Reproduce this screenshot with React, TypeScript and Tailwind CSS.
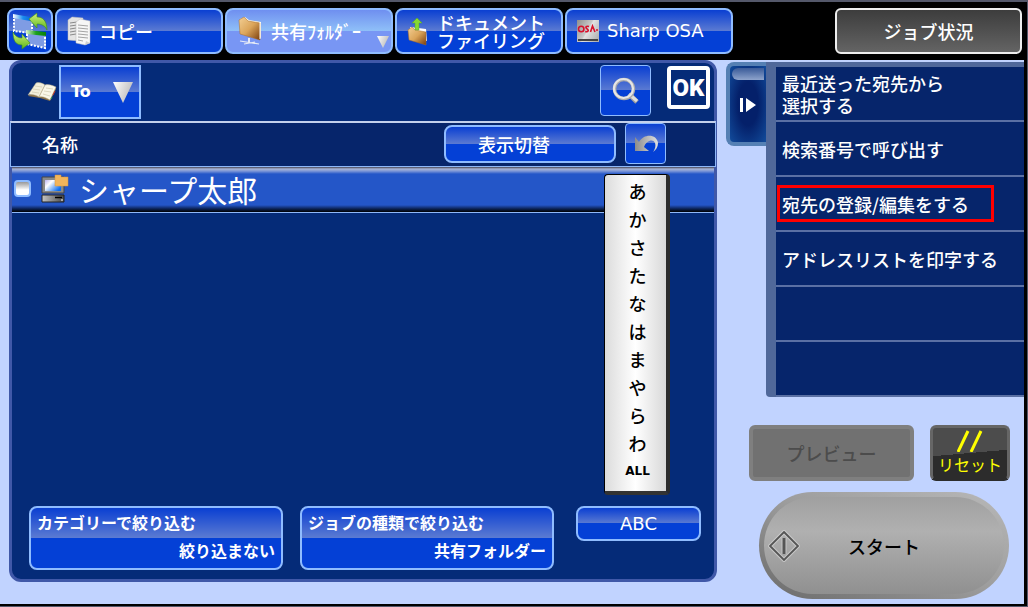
import type { ReactNode } from 'react';

const gloss = 'bg-[linear-gradient(#0a3fd2,#5c7bd2_50%,#0440d6_50%)] border-[#8fbcff]';
const latin = "font-['DejaVu_Sans','Noto_Sans_CJK_JP',sans-serif]";

const kana = ['あ', 'か', 'さ', 'た', 'な', 'は', 'ま', 'や', 'ら', 'わ'];

const menuItems = [
  { lines: ['最近送った宛先から', '選択する'] },
  { lines: ['検索番号で呼び出す'] },
  { lines: ['宛先の登録/編集をする'], marked: true },
  { lines: ['アドレスリストを印字する'] },
  { lines: [] },
  { lines: [] },
];

function SwitchIcon() {
  return (
    <svg viewBox="0 0 36 38" className="h-[38px] w-9" aria-hidden="true">
      <defs>
        <linearGradient id="sw-blue">
          <stop offset="0" stopColor="#fff" />
          <stop offset="0.5" stopColor="#1a8cf0" />
          <stop offset="1" stopColor="#0560d0" />
        </linearGradient>
        <linearGradient id="sw-green">
          <stop offset="0" stopColor="#dff5d0" />
          <stop offset="0.5" stopColor="#1ca01c" />
          <stop offset="1" stopColor="#0a800a" />
        </linearGradient>
        <linearGradient id="sw-arrow" x1="0" y1="0" x2="0" y2="1">
          <stop offset="0" stopColor="#d2f07a" />
          <stop offset="1" stopColor="#5cb81c" />
        </linearGradient>
      </defs>
      <path d="M2 5l18 3v14L2 19z" fill="#7f9ce4" />
      <path d="M2 7v12l18 2V8" fill="none" stroke="#fff" strokeWidth="2" strokeDasharray="2 1.4" />
      <path d="M1 2l20 3.500v4L1 6z" fill="url(#sw-blue)" />
      <path d="M15 20l19 3v13l-19-4z" fill="#7f9ce4" />
      <path d="M15 22v10l18 4V23" fill="none" stroke="#fff" strokeWidth="2" strokeDasharray="2 1.4" />
      <path d="M14 18l20 2v4l-20-2z" fill="url(#sw-green)" />
      <path d="M17 7l8-6v4c6 0 10 4 10 13-2-4-5-6-10-6v4z" fill="url(#sw-arrow)" stroke="#3f8f18" strokeWidth="0.6" />
      <path d="M18 31l-8 6v-4C4 33 1 29 1 20c2 4 5 6 9 6v-4z" fill="url(#sw-arrow)" stroke="#3f8f18" strokeWidth="0.6" />
    </svg>
  );
}

function CopyIcon() {
  return (
    <svg viewBox="0 0 24 30" className="h-[30px] w-6" aria-hidden="true">
      <path d="M1 4l4-3 11 1v21l-4 2-11-1z" fill="#e4e4e4" stroke="#bbb" strokeWidth="0.5" />
      <path d="M3 7l7-1M3 10l7-1M3 13l6-1M3 16l6-1M3 19l6-1" stroke="#8a8a8a" />
      <path d="M9 6l4-3 10 2v22l-5 2-9-2z" fill="#f6f6f6" stroke="#bbb" strokeWidth="0.5" />
      <path d="M11 9l10 1M11 12l10 1M11 15l10 1M11 18l10 1M11 21l10 1M11 24l5 1" stroke="#a4a4a4" />
      <path d="M18 29l1-4 4 2z" fill="#cfcfcf" />
    </svg>
  );
}

function FolderGradient({ id }: { id: string }) {
  return (
    <linearGradient id={id} x1="0" y1="0" x2="1" y2="1">
      <stop offset="0" stopColor="#f3cf94" />
      <stop offset="0.5" stopColor="#dba55a" />
      <stop offset="1" stopColor="#7a3d0c" />
    </linearGradient>
  );
}

function NetworkFolderIcon() {
  return (
    <svg viewBox="0 0 26 30" className="h-[30px] w-[26px]" aria-hidden="true">
      <defs>
        <FolderGradient id="net-folder" />
      </defs>
      <path d="M3 3l5-2 4 3 12 2v16L5 16z" fill="#fbf2dc" />
      <path d="M2 4l5-3 4 4 12 2v17L3 18z" fill="url(#net-folder)" stroke="#a86b28" strokeWidth="0.5" />
      <path d="M23 6v17" stroke="#fff" strokeWidth="1" />
      <path d="M12 22v5" stroke="#e6ebf6" strokeWidth="2" />
      <path d="M3 25l19 3M7 28l11-2" stroke="#e6ebf6" strokeWidth="1.2" />
    </svg>
  );
}

function FilingIcon() {
  return (
    <svg viewBox="0 0 22 29" className="h-[29px] w-[22px]" aria-hidden="true">
      <defs>
        <FolderGradient id="filing-folder" />
      </defs>
      <path d="M3 10l16 2 1 12-16-4z" fill="#fff" />
      <path d="M1 13l4-3 3 3 11 2v13L2 23z" fill="url(#filing-folder)" stroke="#a86b28" strokeWidth="0.5" />
      <path d="M10 1l5 5h-3v7H8V6H5z" fill="#86d832" stroke="#5aa81c" strokeWidth="0.5" />
    </svg>
  );
}

function OsaIcon() {
  return (
    <span className="flex size-[22px] flex-col justify-between bg-[linear-gradient(120deg,#8f8f8f,#c8c8c8_45%,#e2e2e2_50%,#a8a8a8)] pt-1 pb-px">
      <svg viewBox="0 0 22 10" className="h-2.5 w-[22px]" aria-hidden="true">
        <g fill="none" stroke="#d8102c" strokeWidth="1.600">
          <circle cx="4.200" cy="5" r="2.700" />
          <path d="M12 2.500c-3-1-4 1-2 2.300s1.500 3.500-1.800 2.700M13.500 8l2-6 2.500 6" />
        </g>
        <circle cx="20" cy="6" r="1" fill="#d8102c" />
      </svg>
      <span className="mx-px h-0.5 bg-[#444]" />
    </span>
  );
}

function BookIcon() {
  return (
    <svg viewBox="0 0 30 20" className="h-5 w-[30px]" aria-hidden="true">
      <path d="M1 14l12 2 10 3 6-12-1-2-14 1z" fill="#8a7048" />
      <path d="M1 13L9 1c3-1 7 0 9 2l-6 12c-3-2-7-3-11-2z" fill="#f3efdc" stroke="#b0a684" strokeWidth="0.5" />
      <path d="M12 15l6-12c3-1 7 0 11 2l-6 13c-4-2-7-4-11-3z" fill="#faf7e8" stroke="#b0a684" strokeWidth="0.5" />
      <path d="M8 4l7 1M6 7l7 1M5 10l7 1M19 6l7 1M17 9l7 1M16 12l7 2" stroke="#d6cfb4" strokeWidth="0.8" />
      <path d="M28 9l-2 4" stroke="#c83a2a" />
      <path d="M25 15l-1 2" stroke="#2a9a5a" />
    </svg>
  );
}

function Triangle({ id, className }: { id: string; className: string }) {
  return (
    <svg viewBox="0 0 20 20" preserveAspectRatio="none" className={className} aria-hidden="true">
      <defs>
        <linearGradient id={id} x1="0" y1="0" x2="1" y2="0.4">
          <stop offset="0" stopColor="#fff" />
          <stop offset="1" stopColor="#bdbdbd" />
        </linearGradient>
      </defs>
      <path d="M0 0h20L10 20z" fill={`url(#${id})`} />
    </svg>
  );
}

function SearchIcon() {
  return (
    <svg viewBox="0 0 28 28" className="size-7" aria-hidden="true">
      <path d="M17 17l8 8" stroke="#9f9f9f" strokeWidth="5" />
      <path d="M17 17l8 7" stroke="#dedede" strokeWidth="3" />
      <circle cx="12" cy="12" r="9.5" fill="none" stroke="#aaa" strokeWidth="3.4" />
      <circle cx="11.5" cy="11.5" r="9.5" fill="none" stroke="#e6e6e6" strokeWidth="2.2" />
    </svg>
  );
}

function UndoIcon() {
  return (
    <svg viewBox="0 0 24 20" className="h-5 w-6" aria-hidden="true">
      <defs>
        <linearGradient id="undo">
          <stop offset="0" stopColor="#8c8c8c" />
          <stop offset="1" stopColor="#e0e0e0" />
        </linearGradient>
      </defs>
      <path d="M1 3v14h14l-5-4C12 7 19 4 21 9c1 3 0 6-2 9 3-2 5-5 5-9C23 0 10-1 5 8z" fill="url(#undo)" />
    </svg>
  );
}

function ComputerIcon() {
  return (
    <svg viewBox="0 0 28 29" className="h-[29px] w-7" aria-hidden="true">
      <defs>
        <linearGradient id="screen" x1="0" y1="0" x2="1" y2="0.7">
          <stop offset="0" stopColor="#b9b4f0" />
          <stop offset="0.35" stopColor="#fff" />
          <stop offset="1" stopColor="#0a6cf0" />
        </linearGradient>
        <linearGradient id="case">
          <stop offset="0" stopColor="#c4c4c4" />
          <stop offset="1" stopColor="#4a4a4a" />
        </linearGradient>
      </defs>
      <path d="M1 3h22v16H1z" fill="#8a8a8a" stroke="#444" />
      <path d="M4 6h16v11H4z" fill="url(#screen)" />
      <path d="M1 21h22v7H1z" fill="url(#case)" stroke="#222" />
      <path d="M14 23.500h7" stroke="#000" strokeWidth="1.500" />
      <path d="M20 26h2" stroke="#fff" />
      <path d="M14 1h6v2h7v9H14z" fill="#f2b55c" stroke="#d8953a" strokeWidth="0.5" />
    </svg>
  );
}

function StartIcon() {
  return (
    <svg viewBox="0 0 32 32" className="size-8" aria-hidden="true">
      <path d="M16 2l14 14-14 14L2 16z" fill="none" stroke="#ddd" strokeWidth="4" opacity="0.6" />
      <path d="M16 2l14 14-14 14L2 16z" fill="none" stroke="#555" strokeWidth="1.8" />
      <path d="M16 8v16" stroke="#ddd" strokeWidth="5" opacity="0.6" />
      <path d="M16 8v16" stroke="#555" strokeWidth="3" />
    </svg>
  );
}

function ModeTab({ icon, active, children }: { icon: ReactNode; active?: boolean; children: ReactNode }) {
  const look = active
    ? 'bg-[linear-gradient(#6f8ff0,#8fc0f8_50%,#7896f4_50%)] border-[#8fbcff]'
    : gloss;
  return (
    <button
      type="button"
      className={`relative flex max-w-42 flex-1 items-center gap-2 rounded-lg border-2 pl-2.5 text-left whitespace-nowrap ${look}`}
    >
      {icon}
      {children}
      {active && <Triangle id="tab-tri" className="absolute right-0.5 bottom-1 h-3 w-3" />}
    </button>
  );
}

function FilterButton({ title, value }: { title: string; value: string }) {
  return (
    <button
      type="button"
      className={`flex h-16 max-w-[254px] flex-1 flex-col items-start justify-between rounded-lg border-2 px-1.5 pb-1 text-base font-bold ${gloss}`}
    >
      <span className="leading-7">{title}</span>
      <span className="self-end leading-7">{value}</span>
    </button>
  );
}

function Header() {
  return (
    <header className="flex h-[58px] justify-between bg-black py-1.5 pr-0.5 pl-[7px]">
      <nav className="flex flex-1 gap-0.5">
        <button
          type="button"
          aria-label="切替"
          className={`flex w-[46px] items-center justify-center rounded-lg border-2 ${gloss}`}
        >
          <SwitchIcon />
        </button>
        <ModeTab icon={<CopyIcon />}>コピー</ModeTab>
        <ModeTab icon={<NetworkFolderIcon />} active>
          共有ﾌｫﾙﾀﾞｰ
        </ModeTab>
        <ModeTab icon={<FilingIcon />}>
          <span className="leading-[18px]">
            ドキュメント
            <br />
            ファイリング
          </span>
        </ModeTab>
        <ModeTab icon={<OsaIcon />}>
          <span className={latin}>Sharp OSA</span>
        </ModeTab>
      </nav>
      <button
        type="button"
        className="w-[187px] rounded-md border-2 border-[#eee] bg-linear-to-b from-[#3d3d3d] to-[#646464]"
      >
        ジョブ状況
      </button>
    </header>
  );
}

function AddressPanel() {
  return (
    <main className="flex flex-1 flex-col rounded-xl border-3 border-[#4058a8] bg-[#052b78]">
      <div className="flex h-[58px] items-start pt-0.5 pr-1 pl-[15px]">
        <div className="flex items-center gap-0.5">
          <BookIcon />
          <button
            type="button"
            className={`flex h-[54px] w-[82px] items-center justify-between border-2 pr-1.5 pl-2.5 text-base font-bold ${gloss} ${latin}`}
          >
            To
            <Triangle id="to-tri" className="h-[21px] w-5" />
          </button>
        </div>
        <button
          type="button"
          aria-label="検索"
          className={`ml-auto flex size-[51px] items-center justify-center rounded-sm border ${gloss}`}
        >
          <SearchIcon />
        </button>
        <button
          type="button"
          className="mt-px ml-4 size-[43px] rounded-sm border-4 border-white font-['Roboto',sans-serif] text-2xl leading-none font-black"
        >
          OK
        </button>
      </div>

      <div className="-mx-0.5 flex h-[46px] items-center border border-t-2 border-[#8fb8f8] border-t-[#c3d0ec] bg-[#06256b] pr-[49px] pb-0.5 pl-[31px]">
        <h1>名称</h1>
        <button
          type="button"
          className={`ml-auto h-[38px] w-[172px] rounded-lg border-2 pr-8 ${gloss}`}
        >
          表示切替
        </button>
        <button
          type="button"
          aria-label="戻す"
          className={`ml-[9px] flex size-[41px] items-center justify-center rounded-sm border ${gloss}`}
        >
          <UndoIcon />
        </button>
      </div>

      <div className="relative flex-1">
        <label className="flex h-[46px] items-center border-b border-[#8fb8f8] bg-[linear-gradient(#445,#a8b4d4_2px,#7f98d8_4px,#2456c8_7px,#2456c8_38px,#0a2050_42px,#000_45px)] pb-0.5 pl-0.5 text-[30px] font-normal">
          <input
            type="checkbox"
            className="size-[17px] appearance-none rounded-sm border-2 border-[#8fbcff] bg-linear-to-b from-[#999] to-white to-60% checked:from-[#0440d6]"
          />
          <span className="mx-2.5">
            <ComputerIcon />
          </span>
          シャープ太郎
        </label>
        <nav
          aria-label="索引"
          className="absolute top-[7px] right-11 flex w-[66px] flex-col rounded-sm border border-r-4 border-b-4 border-black border-r-[#2b2b2b] border-b-[#333] bg-linear-to-r from-[#dcdcdc] via-white to-[#d8d8d8] pt-0.5 pb-1.5 pl-1 text-black"
        >
          {kana.map((k) => (
            <button type="button" key={k} className="h-7">
              {k}
            </button>
          ))}
          <button type="button" className={`h-7 text-xs font-bold ${latin}`}>
            ALL
          </button>
        </nav>
      </div>

      <div className="flex items-start pr-[13px] pb-[9px] pl-[17px]">
        <div className="flex flex-1 gap-[17px]">
          <FilterButton title="カテゴリーで絞り込む" value="絞り込まない" />
          <FilterButton title="ジョブの種類で絞り込む" value="共有フォルダー" />
        </div>
        <button type="button" className={`h-[35px] w-[125px] rounded-lg border-2 ${gloss} ${latin}`}>
          ABC
        </button>
      </div>
    </main>
  );
}

function ActionPanel() {
  return (
    <aside className="flex w-[298px] flex-col">
      <div className="flex items-start pt-0.5">
        <button
          type="button"
          aria-label="閉じる"
          className="flex h-[84px] w-10 flex-col items-center rounded-l-lg border-4 border-r-0 border-[#5580b4] bg-[radial-gradient(#04206a_40%,#124c9c)]"
        >
          <span className="mt-0.5 ml-0.5 h-3 w-8 self-start rounded-l-full bg-linear-to-b from-[#3a5a98] to-[#8fa4cc]" />
          <svg viewBox="0 0 16 14" className="mt-[18px] h-3.5 w-4" aria-hidden="true">
            <path d="M0 0h3v14H0zM6 0l10 7-10 7z" fill="#fff" />
          </svg>
        </button>
        <ul className="flex-1 rounded-bl-sm border-t-5 border-l-10 border-[#50689a] bg-[#06256b]">
          {menuItems.map(({ lines, marked }, i) => (
            <li key={i} className="h-[55px] border-b-2 border-[#5a70a4]">
              <button type="button" className="flex size-full items-center text-left leading-[22px]">
                <span
                  className={
                    marked
                      ? 'ml-px flex h-[37px] w-[217px] items-center border-3 border-[#f00] pl-0.5'
                      : 'pl-1.5'
                  }
                >
                  {lines.map((line) => (
                    <span key={line} className="block">
                      {line}
                    </span>
                  ))}
                </span>
              </button>
            </li>
          ))}
        </ul>
      </div>

      <div className="mt-7 flex gap-4 pl-[23px]">
        <button
          type="button"
          disabled
          className="h-14 w-[165px] rounded-md border-4 border-[#7f7f7f] bg-[#717171] text-[#4c4c4c]"
        >
          プレビュー
        </button>
        <button
          type="button"
          className="flex h-14 w-20 flex-col items-center rounded-md border-3 border-[#666] border-b-[#2c2c2c] bg-[linear-gradient(175deg,#4c4c4c_50%,#2c2c2c_50%)] text-base font-normal text-[#ff0]"
        >
          <svg viewBox="0 0 26 22" className="mt-0.5 h-[22px] w-[26px]" aria-hidden="true">
            <path d="M1 22L11 1M14 22L24 1" stroke="#ff0" strokeWidth="3" />
          </svg>
          <span className="leading-6">リセット</span>
        </button>
      </div>

      <button
        type="button"
        className="mt-[11px] ml-[33px] h-[107px] w-[250px] rounded-full bg-linear-to-tr from-[#6a6a6a] via-[#9c9c9c] to-[#b8b8b8] p-[5px] text-black"
      >
        <span className="relative flex size-full items-center justify-center rounded-full bg-[linear-gradient(#a0a0a0,#b0b0b0_35%,#909090)]">
          <span className="absolute left-1">
            <StartIcon />
          </span>
          スタート
        </span>
      </button>
    </aside>
  );
}

export default function App() {
  return (
    <div className="flex min-h-screen border-t-2 border-r border-b border-[#54586a] font-['Noto_Sans_CJK_JP',sans-serif] text-lg leading-6 font-medium text-white">
      <div className="flex flex-1 flex-col border-r-3 border-b-2 border-black bg-[#c1d3ff]">
        <Header />
        <div className="flex flex-1 gap-[9px] pl-[9px]">
          <div className="flex flex-1 pb-[22px]">
            <AddressPanel />
          </div>
          <ActionPanel />
        </div>
      </div>
    </div>
  );
}
